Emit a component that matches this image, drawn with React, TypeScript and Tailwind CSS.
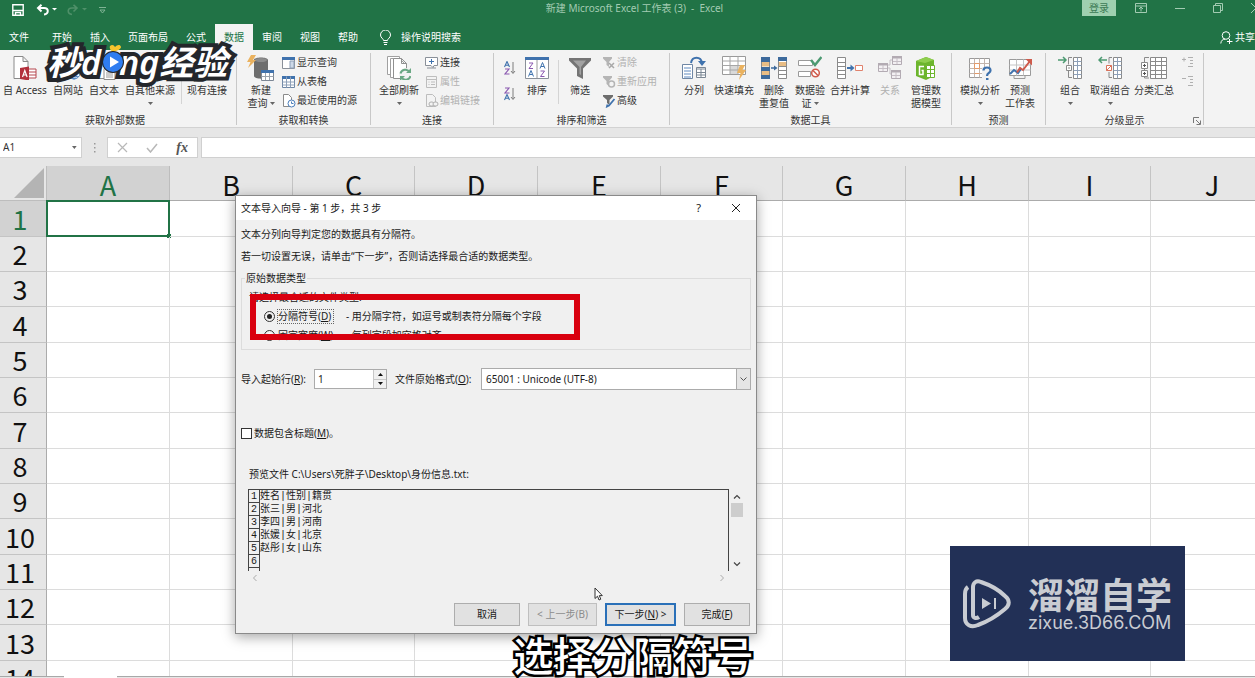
import type { ReactNode } from "react";

const columns = ["A", "B", "C", "D", "E", "F", "G", "H", "I", "J"];
const rows = Array.from({ length: 14 }, (_, i) => i + 1);

const previewLines = ["姓名|性别|籍贯", "张三|男|河北", "李四|男|河南", "张媛|女|北京", "赵彤|女|山东", ""];

function Icon({ children, size = 24, className = "" }: { children: ReactNode; size?: number; className?: string }) {
  return (
    <svg width={size} height={size} viewBox={`0 0 ${size} ${size}`} fill="none" className={`shrink-0 ${className}`} aria-hidden="true">
      {children}
    </svg>
  );
}

/* ---------- big ribbon icons, 24x24 ---------- */

const page = <path d="M4 1.5h9l5 5v16H4z M13 1.5v5h5" fill="#fff" stroke="#8a8a8a" />;

const AccessIcon = () => (
  <Icon>
    <path d="M1 .5h9l5 5v17H1z M10 .5v5h5" fill="#fff" stroke="#8a8a8a" />
    <path d="M15 13h8v9h-8M15 16h8M15 19h8" fill="#fff" stroke="#b5474f" />
    <path d="M7 12l9-1.500v14l-9-1.500z" fill="#b3303c" />
    <path d="M9.500 21l2.300-6.500 2.300 6.500M10.300 19h3" stroke="#fff" strokeWidth="1.200" />
  </Icon>
);

const WebIcon = () => (
  <Icon>
    {page}
    <circle cx="18" cy="17" r="6" fill="#fff" stroke="#4a7ebb" />
    <path d="M12 17h12M18 11v12M13.500 13.500h9M13.500 20.500h9" stroke="#4a7ebb" strokeWidth=".8" />
    <ellipse cx="18" cy="17" rx="3" ry="6" stroke="#4a7ebb" strokeWidth=".8" />
  </Icon>
);

const TextFileIcon = () => (
  <Icon>
    {page}
    <path d="M12 12.500h8l3 3v8H12z" fill="#fff" stroke="#8a8a8a" />
    <path d="M14 17h7M14 19h7M14 21h7" stroke="#9a9a9a" />
  </Icon>
);

const OtherIcon = () => (
  <Icon>
    {page}
    <path d="M12 14l4 4-4 4M21 12l-4 9" stroke="#4a62a8" strokeWidth="1.500" />
  </Icon>
);

const ConnectionsIcon = () => (
  <Icon>
    {page}
    <path d="M11 14c0-3 11-3 11 0v7c0 3-11 3-11 0z" fill="#e9b766" />
    <ellipse cx="16.500" cy="14" rx="5.500" ry="2" fill="#f5d59a" />
  </Icon>
);

const NewQueryIcon = () => (
  <svg width="28" height="26" viewBox="0 0 28 26" fill="none" className="-my-px shrink-0" aria-hidden="true">
    <path d="M7 5c0-3.500 14-3.500 14 0v16c0 3.500-14 3.500-14 0z" fill="#6d6d6d" />
    <ellipse cx="14" cy="5" rx="6" ry="2" fill="#8c8c8c" />
    <path d="M4 0h5L6 5h3L1 13l2.500-6H0z" fill="#eab25f" />
    <path d="M14.500 15.500h12v10h-12z" fill="#fff" stroke="#7c8795" />
    <path d="M14 15h13v3H14z" fill="#3f72ad" />
    <path d="M14.500 21.500h12M18.500 18v7M22.500 18v7" stroke="#9aa3ad" />
  </svg>
);

const RefreshIcon = () => (
  <Icon>
    <path d="M.5.5h12v18H.5z" fill="#fff" stroke="#a0a0a0" />
    <path d="M3.500 2.500h9l5 5v14h-14z" fill="#fff" stroke="#a0a0a0" />
    <path d="M6.500 2.500h8l5 5v15h-13z M14.500 2.500v5h5" fill="#fff" stroke="#909090" />
    <circle cx="18.500" cy="18.500" r="6.500" fill="#f3f3f3" />
    <path d="M13.500 17.500a5 5 0 0 1 9-1.500M23.500 20a5 5 0 0 1-9 1.500" stroke="#6aa884" strokeWidth="2" />
    <path d="M24 12v5h-5zM13 25v-5h5z" fill="#6aa884" />
  </Icon>
);

const SortIcon = () => (
  <Icon>
    <path d="M.5 2.500h23v20H.5z" fill="#fff" stroke="#8a9099" />
    <path d="M0 1h24v3H0z" fill="#3f72ad" />
    <path d="M12 4v18" stroke="#9a9a9a" />
    <path d="M4 7h4l-4 5.500h4M15.500 15h4l-4 5.500h4" stroke="#8a58b0" />
    <path d="M3.500 20.500l2.500-6 2.500 6M4.500 18.500h3M15 12.500l2.500-6 2.500 6M16 10.500h3" stroke="#3f72ad" />
  </Icon>
);

const FunnelIcon = () => (
  <Icon>
    <path d="M1 2h22v2.500l-8 8V23l-6-3v-7.500l-8-8z" fill="#747474" />
    <path d="M5 4.500h13l-5 6.500v8l-1.500-1v-7z" fill="#a2a2a2" />
  </Icon>
);

const SplitIcon = () => (
  <Icon>
    <path d="M.5 8.500h10v14H.5z" fill="#fff" stroke="#6f87a5" />
    <path d="M2 12h7M2 15h7M2 18h7M2 21h7" stroke="#5f8ac0" />
    <path d="M14.500 11.500h9v10h-9z" fill="#fff" stroke="#7b8794" />
    <path d="M14.500 13h9M14.500 16.500h9M14.500 19h9M19 13v9" stroke="#7b8794" />
    <path d="M9 7c1-7 10-7 11 0" stroke="#3f72ad" strokeWidth="2" />
    <path d="M16 5h8l-4 5z" fill="#3f72ad" />
  </Icon>
);

const FlashFillIcon = () => (
  <Icon>
    <path d="M.5.5h23v18H.5z" fill="#fff" stroke="#9a9a9a" />
    <path d="M8 9h8v9H8z" fill="#d9d9d9" />
    <path d="M.5 5h23M.5 9.500h23M.5 14h23M8 .5v18M16 .5v18" stroke="#a6a6a6" />
    <path d="M18 9h5l-2.500 5H24l-7 10 1.500-7H15z" fill="#eab25f" />
  </Icon>
);

const DedupeIcon = () => (
  <svg width="26" height="24" viewBox="0 0 26 24" fill="none" aria-hidden="true">
    <path d="M.5 2.500h8v20h-8zM17.500 2.500h8v20h-8z" fill="#fff" stroke="#8a8a8a" />
    <path d="M0 1h9v5H0zM0 11h9v4H0zM0 19h9v4H0zM17 1h9v4h-9z" fill="#3d6a9c" />
    <path d="M1 6h7v4.500H1zM1 15h7v4H1zM18 6h7v4h-7z" fill="#e8bd85" />
    <path d="M17.500 10.500h8M17.500 14.500h8M17.500 18.500h8" stroke="#8a8a8a" />
    <path d="M10 12h4" stroke="#3d6a9c" strokeWidth="1.500" />
    <path d="M13 9.500l3.500 2.500-3.500 2.500z" fill="#3d6a9c" />
  </svg>
);

const ValidationIcon = () => (
  <Icon>
    <path d="M.5 4.500h14v5H.5zM.5 15.500h12v5H.5z" fill="#fff" stroke="#9a9a9a" />
    <path d="M13 4l4 5 6.500-8" stroke="#4d9a72" strokeWidth="2.500" />
    <circle cx="17.500" cy="17" r="3.800" fill="#fff" stroke="#cf5b4c" strokeWidth="1.500" />
    <path d="M15 14.500l5 5" stroke="#cf5b4c" strokeWidth="1.500" />
  </Icon>
);

const ConsolidateIcon = () => (
  <svg width="26" height="24" viewBox="0 0 26 24" fill="none" aria-hidden="true">
    <path d="M.5 1.500h8v21h-8z" fill="#fff" stroke="#8a8a8a" />
    <path d="M.5 6.500h8M.5 10.500h8M.5 14.500h8M.5 18.500h8" stroke="#8a8a8a" />
    <path d="M10 12h5" stroke="#3f72ad" strokeWidth="2" />
    <path d="M13.500 8.500l4 3.500-4 3.500z" fill="#3f72ad" />
    <path d="M18.500 9.500h7v5h-7z" fill="#fff" stroke="#e0826d" />
  </svg>
);

const RelationsIcon = () => (
  <Icon>
    <path d="M.5 7.500h9v8h-9zM14.500.5h9v8h-9zM13.500 14.500h9v8h-9z" fill="#f3f0f3" stroke="#b3abb3" />
    <path d="M0 7h10v2.500H0zM14 0h10v2.500H14zM13 14h10v2.500H13z" fill="#b3abb3" />
    <path d="M1 12.500h8M15 5.500h8M14 19.500h8M5 9v6M19 2v6M18 16v6M10 9h2V4h2M10 12h2v6h1" stroke="#c6bfc6" />
  </Icon>
);

const DataModelIcon = () => (
  <Icon>
    <path d="M2 5l10-4 8 3v16l-8 4-10-4z" fill="#6cb52d" />
    <path d="M2 5l10-4 8 3-9 3z" fill="#8fce4e" />
    <path d="M10 10.500H5.500v8H9v-4H7.500" stroke="#fff" strokeWidth="1.500" />
    <path d="M12.500 9.500h8v12h-8z" fill="#fff" stroke="#6cb52d" />
    <path d="M12.500 13.500h8M12.500 17.500h8M16.500 9.500v12" stroke="#6cb52d" />
  </Icon>
);

const WhatIfIcon = () => (
  <Icon>
    <path d="M1.500 2.500h20v19h-20z" fill="#fff" stroke="#9a9a9a" />
    <path d="M1.500 7.500h20M1.500 12.500h20M1.500 17.500h20M6.500 2.500v19M11.500 2.500v19M16.500 2.500v19" stroke="#c2b5ad" />
    <path d="M6.500 7.500h5v5h-5zM6.500 17.500h5" stroke="#e49a68" />
    <path d="M14 11h10v13H14z" fill="#f3f3f3" />
    <path d="M15.500 14.500c0-4 7-4 7 0 0 2.500-3.500 2.500-3.500 5.500" stroke="#3f72ad" strokeWidth="2.200" />
    <path d="M18 22h2.500v2H18z" fill="#3f72ad" />
  </Icon>
);

const ForecastIcon = () => (
  <Icon>
    <path d="M1.500 3.500h21v16h-21z" fill="#fff" stroke="#9a9a9a" />
    <path d="M1.500 9h21M1.500 14h21M8.500 3.500v16M15.500 3.500v16" stroke="#c4c4c4" />
    <path d="M6 19.500v3h11v-3" stroke="#9a9a9a" />
    <path d="M2 18l4-4 4 3 3-4" stroke="#3f72ad" strokeWidth="2" />
    <path d="M9 16.500l3-4.500 3 2 7-9" stroke="#cf5b4c" strokeWidth="2" />
    <path d="M17.500 3H24v6.500z" fill="#cf5b4c" />
  </Icon>
);

const GroupIcon = () => (
  <Icon>
    <path d="M0 4h7M5 1l3 3-3 3" stroke="#4d9a72" strokeWidth="1.500" />
    <path d="M15.500 1.500h8v21h-8z" fill="#fff" stroke="#8a8a8a" />
    <path d="M19.500 1.500v21M15.500 5.500h8M15.500 9.500h8M15.500 14.500h8M15.500 18.500h8" stroke="#8ea0b8" />
    <path d="M14 1.500h-3.500v7M10.500 15v6.500H14" stroke="#8a8a8a" />
    <path d="M8.500 9.500h5v5h-5z M10 12h2" fill="#fff" stroke="#8a8a8a" />
  </Icon>
);

const UngroupIcon = () => (
  <Icon>
    <path d="M1 4h8M4 1L1 4l3 3" stroke="#4d9a72" strokeWidth="1.500" />
    <path d="M15.500 1.500h8v21h-8z" fill="#fff" stroke="#8a8a8a" />
    <path d="M19.500 1.500v21M15.500 5.500h8M15.500 9.500h8M15.500 14.500h8M15.500 18.500h8" stroke="#8ea0b8" />
    <path d="M14 1.500h-3v6M11 16v5.500h3" stroke="#8a8a8a" />
    <path d="M8.500 9.500h5v5h-5z M8.500 14.500l5-5" fill="#fff" stroke="#d9715a" />
  </Icon>
);

const SubtotalIcon = () => (
  <svg width="26" height="24" viewBox="0 0 26 24" fill="none" aria-hidden="true">
    <path d="M9.500 1.500h16v21h-16z" fill="#fff" stroke="#8a8a8a" />
    <path d="M9.500 5.500h16M9.500 9.500h16M9.500 14.500h16M9.500 18.500h16M14.500 1.500v21M20.500 1.500v21" stroke="#8a8a8a" />
    <path d="M8 1.500H3.500V22H8" stroke="#8a8a8a" />
    <path d="M.5 6.500h6v6h-6zM.5 14.500h6v6h-6z" fill="#fff" stroke="#8a8a8a" />
    <path d="M2 9.500h3M3.500 8v3M2 17.500h3M3.500 16v3" stroke="#555" />
  </svg>
);

/* ---------- small ribbon icons, 14x14 ---------- */

const ShowQueriesIcon = () => (
  <Icon size={14}>
    <path d="M.5 1.500h12v11H.5z" fill="#fff" stroke="#8a9099" />
    <path d="M0 1h13v3H0z" fill="#3f72ad" />
    <path d="M8 5h4v7H8z" fill="#cdd9e8" stroke="#8ea0b8" />
  </Icon>
);

const FromTableIcon = () => (
  <Icon size={14}>
    <path d="M.5 1.500h12v11H.5z" fill="#fff" stroke="#6f87a5" />
    <path d="M0 1h13v3H0z" fill="#3f72ad" />
    <path d="M.5 7h12M.5 10h12M4.500 1.500v11M8.500 1.500v11" stroke="#8ea0b8" />
  </Icon>
);

const RecentIcon = () => (
  <Icon size={14}>
    <path d="M1.500.5h5l3 3v9h-8z" fill="#fff" stroke="#8a8a8a" />
    <circle cx="9.500" cy="9.500" r="3.500" fill="#fff" stroke="#4a7ebb" />
    <path d="M9.500 7.500v2h2" stroke="#4a7ebb" />
  </Icon>
);

const LinkIcon = () => (
  <Icon size={14}>
    <path d="M.5 1.500h12v8H9l-1 2-2-2H.5z" fill="#fff" stroke="#8a9099" />
    <path d="M6.500 3v5M4 5.500h5" stroke="#3f72ad" />
    <path d="M2 12h9" stroke="#8a9099" />
  </Icon>
);

const PropertiesIcon = () => (
  <Icon size={14}>
    <path d="M1.500 1.500h10v11h-10zM1.500 4.500h10M3.500 7h1M6 7h4M3.500 9.500h1M6 9.500h4" stroke="#bdbdbd" />
  </Icon>
);

const EditLinksIcon = () => (
  <Icon size={14}>
    <path d="M1.500.5h6l3 3v9h-9z" stroke="#bdbdbd" />
    <rect x="4" y="8" width="5" height="4" rx="2" fill="#f3f3f3" stroke="#b0b0b0" />
    <rect x="8" y="8" width="5" height="4" rx="2" fill="#f3f3f3" stroke="#b0b0b0" />
  </Icon>
);

const ClearIcon = () => (
  <Icon size={14}>
    <path d="M1 1h9v1.500L7 6v5L4.500 9V6L1 2.500z" fill="#b5b5b5" />
    <path d="M7 7l5 5M12 7l-5 5" stroke="#a8a8a8" strokeWidth="1.500" />
  </Icon>
);

const ReapplyIcon = () => (
  <Icon size={14}>
    <path d="M1 1h9v1.500L7 6v5L4.500 9V6L1 2.500z" fill="#b5b5b5" />
    <circle cx="9.500" cy="9" r="3" fill="#f3f3f3" stroke="#b5b5b5" strokeWidth="1.500" />
  </Icon>
);

const AdvancedIcon = () => (
  <Icon size={14}>
    <path d="M1 1h10v1.500L7.500 6v5L5 9V6L1 2.500z" fill="#6d6d6d" />
    <path d="M12.500 5L7 11.500l-2 1 .5-2" stroke="#3f72ad" strokeWidth="1.800" />
  </Icon>
);

const SortAz = ({ flip = false }: { flip?: boolean }) => (
  <svg width="12" height="14" viewBox="0 0 12 14" fill="none" aria-hidden="true">
    <g transform={flip ? "translate(0 7)" : undefined}>
      <path d="M.5 6L3 .5 5.500 6M1.500 4.200h3" stroke="#3f72ad" strokeWidth="1.100" />
    </g>
    <g transform={flip ? "translate(0 -7)" : undefined}>
      <path d="M1 8h4l-4 5h4.500" stroke="#8a58b0" strokeWidth="1.100" />
    </g>
    <path d="M9 1v11M7 10l2 2.500 2-2.500" stroke="#7d7d7d" />
  </svg>
);

const DetailIcon = ({ plus = false }: { plus?: boolean }) => (
  <Icon size={14}>
    <path d="M6 1.500h5M8 4.500h3M8 7.500h3M6 10.500h5" stroke="#b0b0b0" />
    <path d="M0 3.500h4" stroke="#b0b0b0" />
    {plus && <path d="M2 1.500v4" stroke="#b0b0b0" />}
  </Icon>
);

/* ---------- ribbon parts ---------- */

const Caret = ({ className = "" }: { className?: string }) => (
  <svg width="5" height="3" viewBox="0 0 5 3" className={className} aria-hidden="true">
    <path d="M0 0h5L2.500 3z" fill="#666" />
  </svg>
);

type BigProps = { icon: ReactNode; lines: string[]; width?: string; caret?: "below" | "inline"; disabled?: boolean };

function BigButton({ icon, lines, width = "w-9", caret, disabled }: BigProps) {
  return (
    <button type="button" disabled={disabled} className={`flex flex-col items-center pt-[3px] ${width} ${disabled ? "text-[#b1b1b1]" : ""}`}>
      <span className="flex h-6 items-center">{icon}</span>
      <span className="mt-1 flex flex-col items-center whitespace-nowrap">
        {lines.map((line, i) => (
          <span key={line} className="flex items-center gap-0.5">
            {line}
            {caret === "inline" && i === lines.length - 1 && <Caret />}
          </span>
        ))}
        {caret === "below" && <Caret className="mt-[5px]" />}
      </span>
    </button>
  );
}

function SmallButton({ icon, label, disabled }: { icon: ReactNode; label: string; disabled?: boolean }) {
  return (
    <button type="button" disabled={disabled} className={`flex h-[19px] items-center gap-px whitespace-nowrap ${disabled ? "text-[#b1b1b1]" : ""}`}>
      {icon}
      {label}
    </button>
  );
}

function Group({ title, children, width, launcher }: { title: string; children: ReactNode; width: string; launcher?: boolean }) {
  return (
    <section className={`relative flex shrink-0 flex-col border-r border-[#c8c8c8] px-1.5 first:pl-0 ${width}`}>
      <div className="flex h-[57px]">{children}</div>
      <h2 className="mt-[5px] text-center leading-[10px]">{title}</h2>
      {launcher && (
        <svg width="8" height="8" viewBox="0 0 8 8" fill="none" className="absolute right-0.5 bottom-0" aria-hidden="true">
          <path d="M.5 6V.5H6M3 3l4 4M7.500 3.500v4h-4" stroke="#777" />
        </svg>
      )}
    </section>
  );
}

const Divider = () => <span className="mx-[3px] mt-[7px] h-11 w-px bg-[#d4d4d4]" />;

function Ribbon() {
  return (
    <div className="flex overflow-hidden border-b border-[#d2d2d2] bg-[#f3f3f3] pt-[3px] pb-0.5 text-[10px] leading-[13px] text-[#333]">
      <Group title="获取外部数据" width="w-[237px]">
        <BigButton icon={<AccessIcon />} lines={["自 Access"]} width="w-[50px]" />
        <BigButton icon={<WebIcon />} lines={["自网站"]} />
        <BigButton icon={<TextFileIcon />} lines={["自文本"]} />
        <BigButton icon={<OtherIcon />} lines={["自其他来源"]} width="w-14" caret="below" />
        <Divider />
        <BigButton icon={<ConnectionsIcon />} lines={["现有连接"]} width="w-11" />
      </Group>
      <Group title="获取和转换" width="w-[134px]">
        <BigButton icon={<NewQueryIcon />} lines={["新建", "查询"]} caret="inline" />
        <div className="ml-[3px]">
          <SmallButton icon={<ShowQueriesIcon />} label="显示查询" />
          <SmallButton icon={<FromTableIcon />} label="从表格" />
          <SmallButton icon={<RecentIcon />} label="最近使用的源" />
        </div>
      </Group>
      <Group title="连接" width="w-[123px]">
        <BigButton icon={<RefreshIcon />} lines={["全部刷新"]} width="w-11" caret="below" />
        <div className="ml-1">
          <SmallButton icon={<LinkIcon />} label="连接" />
          <SmallButton icon={<PropertiesIcon />} label="属性" disabled />
          <SmallButton icon={<EditLinksIcon />} label="编辑链接" disabled />
        </div>
      </Group>
      <Group title="排序和筛选" width="w-[176px]">
        <div className="mr-[3px] ml-1 flex flex-col gap-3 pt-2">
          <button type="button" aria-label="升序">
            <SortAz />
          </button>
          <button type="button" aria-label="降序">
            <SortAz flip />
          </button>
        </div>
        <BigButton icon={<SortIcon />} lines={["排序"]} />
        <Divider />
        <BigButton icon={<FunnelIcon />} lines={["筛选"]} />
        <div className="ml-1">
          <SmallButton icon={<ClearIcon />} label="清除" disabled />
          <SmallButton icon={<ReapplyIcon />} label="重新应用" disabled />
          <SmallButton icon={<AdvancedIcon />} label="高级" />
        </div>
      </Group>
      <Group title="数据工具" width="w-[282px]">
        <BigButton icon={<SplitIcon />} lines={["分列"]} />
        <BigButton icon={<FlashFillIcon />} lines={["快速填充"]} width="w-11" />
        <BigButton icon={<DedupeIcon />} lines={["删除", "重复值"]} />
        <BigButton icon={<ValidationIcon />} lines={["数据验", "证"]} caret="inline" />
        <BigButton icon={<ConsolidateIcon />} lines={["合并计算"]} width="w-11" />
        <BigButton icon={<RelationsIcon />} lines={["关系"]} disabled />
        <BigButton icon={<DataModelIcon />} lines={["管理数", "据模型"]} />
      </Group>
      <Group title="预测" width="w-[94px]">
        <BigButton icon={<WhatIfIcon />} lines={["模拟分析"]} width="w-11" caret="below" />
        <BigButton icon={<ForecastIcon />} lines={["预测", "工作表"]} />
      </Group>
      <Group title="分级显示" width="w-[158px]" launcher>
        <BigButton icon={<GroupIcon />} lines={["组合"]} caret="below" />
        <BigButton icon={<UngroupIcon />} lines={["取消组合"]} width="w-11" caret="below" />
        <BigButton icon={<SubtotalIcon />} lines={["分类汇总"]} width="w-11" />
        <div className="ml-1.5">
          <SmallButton icon={<DetailIcon plus />} label="" disabled />
          <SmallButton icon={<DetailIcon />} label="" disabled />
        </div>
      </Group>
    </div>
  );
}

function TitleBar() {
  return (
    <div className="flex h-4 overflow-hidden text-[10px] leading-4 text-[#a3cbb2]">
      <div className="flex flex-1 items-center pt-1 pl-3">
        <svg width="12" height="12" viewBox="0 0 12 12" fill="none" aria-hidden="true">
          <path d="M.8.8h10.400v10.400H.8z M.8 6.500h10.400" stroke="#fff" strokeWidth="1.400" />
          <path d="M3.500 11V8.500h5V11" stroke="#fff" strokeWidth="1.400" />
        </svg>
        <svg width="21" height="12" viewBox="0 0 21 12" fill="none" className="ml-3" aria-hidden="true">
          <path d="M2 4h6c5 0 5 6 0 6.500M5.500.8L2 4l3.500 3.500" stroke="#fff" strokeWidth="2" />
          <path d="M16 4h5l-2.500 2.500z" fill="#fff" />
        </svg>
        <svg width="21" height="12" viewBox="0 0 21 12" fill="none" className="ml-[9px]" aria-hidden="true">
          <path d="M11 4H6C1 4 1 10 6 10.500M7.500.8L11 4 7.500 7.500" stroke="#4f9069" strokeWidth="1.600" />
          <path d="M16 4h5l-2.500 2.500z" fill="#4f9069" />
        </svg>
        <svg width="7" height="7" viewBox="0 0 7 7" fill="none" className="ml-3" aria-hidden="true">
          <path d="M0 .5h7M1 3h5L3.500 6z" stroke="#7fb394" />
        </svg>
      </div>
      <h1 className="pr-1 whitespace-pre">新建 Microsoft Excel 工作表 (3)  -  Excel</h1>
      <div className="-mr-1.5 flex flex-1 items-center justify-end">
        <button type="button" className="mr-[19px] h-4 w-[34px] bg-[#9fd0b0] leading-[15px] text-[#3c7a55]">登录</button>
        <svg width="12" height="10" viewBox="0 0 12 10" fill="none" aria-hidden="true">
          <path d="M.5.5h11v9H.5zM.5 3h11M6 8.500V4.500M4 6l2-2 2 2" stroke="#a3cbb2" />
        </svg>
        <svg width="10" height="10" viewBox="0 0 10 10" className="ml-7" aria-hidden="true">
          <path d="M0 5.500h10" stroke="#a3cbb2" />
        </svg>
        <svg width="10" height="10" viewBox="0 0 10 10" fill="none" className="ml-7" aria-hidden="true">
          <path d="M.5 2.500h7v7h-7zM2.500 2V.5h7v7H8" stroke="#a3cbb2" />
        </svg>
        <svg width="10" height="10" viewBox="0 0 10 10" className="ml-7" aria-hidden="true">
          <path d="M0 0l10 10M10 0L0 10" stroke="#a3cbb2" />
        </svg>
      </div>
    </div>
  );
}

function Tabs() {
  const tabs = ["开始", "插入", "页面布局", "公式", "数据", "审阅", "视图", "帮助"];
  return (
    <nav className="mt-2 flex h-[26px] items-stretch overflow-hidden text-[10px] leading-[26px] whitespace-nowrap text-white">
      <a href="#file" className="mr-[5px] px-[9px]">文件</a>
      {tabs.map((tab) => (
        <a key={tab} href="#tab" className={`px-[9px] ${tab === "数据" ? "bg-[#f3f3f3] text-[#217346]" : ""}`}>
          {tab}
        </a>
      ))}
      <button type="button" className="ml-[13px] flex items-center gap-[10px]">
        <svg width="11" height="15" viewBox="0 0 11 15" fill="none" aria-hidden="true">
          <path d="M3.500 10.500c0-2-3-2.500-3-5.500a5 5 0 0 1 10 0c0 3-3 3.500-3 5.500zM3.500 12.500h4M4 14.500h3" stroke="#fff" />
        </svg>
        操作说明搜索
      </button>
      <button type="button" className="ml-auto flex items-center gap-0.5">
        <svg width="13" height="13" viewBox="0 0 13 13" fill="none" aria-hidden="true">
          <circle cx="6" cy="4.500" r="3.800" stroke="#fff" />
          <path d="M.8 12.500C1 9.500 3 8 5 8.200M9.500 8v5M7 10.500h5.500" stroke="#fff" />
        </svg>
        共享
      </button>
    </nav>
  );
}

function FormulaBar() {
  return (
    <div className="flex bg-[#e6e6e6] pt-[9px] pb-2 text-[10px]">
      <div className="flex h-[21px] w-[82px] items-center border border-l-0 border-[#d0d0d0] bg-white pr-1 pl-[3px]">
        <input aria-label="名称框" defaultValue="A1" className="w-full min-w-0 text-[#333] outline-none" />
        <Caret />
      </div>
      <svg width="3" height="21" viewBox="0 0 3 21" className="mx-[11px]" aria-hidden="true">
        <path d="M1 6h1.500v1.500H1zM1 10h1.500v1.500H1zM1 14h1.500v1.500H1z" fill="#999" />
      </svg>
      <div className="flex h-[21px] w-[91px] items-center justify-between border border-[#d0d0d0] bg-white px-[9px]">
        <svg width="11" height="11" viewBox="0 0 11 11" aria-hidden="true">
          <path d="M1 1l9 9M10 1l-9 9" stroke="#b8b8b8" strokeWidth="1.200" />
        </svg>
        <svg width="12" height="10" viewBox="0 0 12 10" fill="none" aria-hidden="true">
          <path d="M1 5l3.500 4L11 1" stroke="#b8b8b8" strokeWidth="1.500" />
        </svg>
        <span className="font-['Liberation_Serif',serif] text-[14px] leading-5 font-bold text-[#555] italic">fx</span>
      </div>
      <input aria-label="编辑栏" className="ml-[3px] h-[21px] min-w-0 flex-1 border border-r-0 border-[#d0d0d0] bg-white px-1 outline-none" />
    </div>
  );
}

function Sheet() {
  return (
    <div className="min-h-0 flex-1 overflow-hidden bg-white">
      <table className="w-px table-fixed border-separate border-spacing-0 font-['Noto_Sans_CJK_SC',sans-serif] text-[27px] leading-8 text-[#111]">
        <colgroup>
          <col className="w-[47px]" />
          {columns.map((c, i) => (
            <col key={c} className={i % 3 === 2 ? "w-[122px]" : "w-[123px]"} />
          ))}
        </colgroup>
        <thead>
          <tr className="h-[35px] bg-[#e6e6e6]">
            <th className="border-r border-b border-[#bdbdbd] p-0">
              <svg width="30" height="30" viewBox="0 0 30 30" className="mr-0.5 ml-auto" aria-hidden="true">
                <path d="M30 0v30H0z" fill="#b4b4b4" />
              </svg>
            </th>
            {columns.map((c) => (
              <th
                key={c}
                scope="col"
                className={`border-r border-b p-0 pt-1 leading-[30px] font-normal ${
                  c === "A" ? "border-r-[#bdbdbd] border-b-[#217346] bg-[#d2d2d2] text-[#217346]" : "border-[#c4c4c4] border-b-[#ababab]"
                }`}
              >
                {c}
              </th>
            ))}
          </tr>
        </thead>
        <tbody>
          {rows.map((r) => (
            <tr key={r} className={r % 3 === 1 ? "h-9" : "h-[35px]"}>
              <th
                scope="row"
                className={`border-r border-b border-[#c4c4c4] border-r-[#ababab] p-0 pr-1.5 text-center font-normal ${
                  r === 1 ? "bg-[#d2d2d2] text-[#217346]" : "bg-[#e6e6e6]"
                }`}
              >
                {r}
              </th>
              {columns.map((c) => (
                <td key={c} className="relative border-r border-b border-[#dcdcdc] p-0">
                  {r === 1 && c === "A" && (
                    <span className="absolute -inset-x-px -inset-y-px border-2 border-[#217346]">
                      <span className="absolute -right-[3px] -bottom-[3px] size-1 bg-[#217346]" />
                    </span>
                  )}
                </td>
              ))}
            </tr>
          ))}
        </tbody>
      </table>
    </div>
  );
}

const Key = ({ children }: { children: string }) => (
  <>
    (<span className="underline underline-offset-1">{children}</span>)
  </>
);

function TypeRadio({ label, letter, note, checked }: { label: string; letter: string; note: string; checked?: boolean }) {
  return (
    <label className="flex h-[19px] items-center whitespace-nowrap">
      <input
        type="radio"
        name="type"
        defaultChecked={checked}
        className="mr-0.5 ml-[15px] size-[11px] appearance-none rounded-full border border-[#333] bg-white bg-clip-content p-0.5 checked:bg-[#222]"
      />
      <span className={`w-[57px] border leading-[13px] ${checked ? "border-dotted border-[#666]" : "border-transparent"}`}>
        {label}
        <Key>{letter}</Key>
      </span>
      <span className="ml-3">- {note}</span>
    </label>
  );
}

function ImportDialog() {
  const button = "h-[23px] border bg-[#e1e1e1] text-center";
  return (
    <div
      role="dialog"
      aria-label="文本导入向导"
      className="absolute top-[195px] left-[235px] w-[522px] border border-[#8a8a8a] bg-[#f0f0f0] text-[10px] text-[#1a1a1a] shadow-[0_3px_12px_rgba(0,0,0,0.35)]"
    >
      <div className="flex h-6 items-center bg-white pr-[15px] pl-[5px]">
        <span className="flex-1">文本导入向导 - 第 1 步，共 3 步</span>
        <button type="button" className="mr-[30px] text-[11px]">?</button>
        <button type="button" aria-label="关闭">
          <svg width="10" height="10" viewBox="0 0 10 10" className="block" aria-hidden="true">
            <path d="M1 1l8 8M9 1L1 9" stroke="#222" />
          </svg>
        </button>
      </div>

      <div className="px-[5px] pt-[3px] pb-[7px]">
        <p className="leading-[22px]">文本分列向导判定您的数据具有分隔符。</p>
        <p className="leading-[22px]">若一切设置无误，请单击“下一步”，否则请选择最合适的数据类型。</p>

        <fieldset className="relative mt-1 border border-[#dcdcdc] px-[7px] pb-1">
          <legend className="-ml-1 px-px leading-[14px]">原始数据类型</legend>
          <p className="mt-[3px] leading-[19px]">请选择最合适的文件类型:</p>
          <TypeRadio label="分隔符号" letter="D" note="用分隔字符，如逗号或制表符分隔每个字段" checked />
          <TypeRadio label="固定宽度" letter="W" note="每列字段加空格对齐" />
          {/* highlight frame */}
          <span className="pointer-events-none absolute top-[9px] left-2 h-[46px] w-[330px] border-6 border-[#d9000f]" />
        </fieldset>

        <div className="mt-[18px] flex h-[22px] items-center">
          <label htmlFor="start-row" className="w-[73px]">
            导入起始行<Key>R</Key>:
          </label>
          <div className="flex h-5 w-[73px] border border-[#ababab] bg-white">
            <input id="start-row" defaultValue="1" className="min-w-0 flex-1 pl-[3px] outline-none" />
            <div className="flex w-[13px] flex-col">
              <button type="button" aria-label="增加" className="flex flex-1 items-center justify-center border-b border-l border-[#c8c8c8] bg-[#f0f0f0]">
                <svg width="5" height="3" viewBox="0 0 5 3" aria-hidden="true">
                  <path d="M0 3h5L2.500 0z" fill="#111" />
                </svg>
              </button>
              <button type="button" aria-label="减少" className="flex flex-1 items-center justify-center border-l border-[#c8c8c8] bg-[#f0f0f0]">
                <svg width="5" height="3" viewBox="0 0 5 3" aria-hidden="true">
                  <path d="M0 0h5L2.500 3z" fill="#111" />
                </svg>
              </button>
            </div>
          </div>
          <label htmlFor="origin" className="ml-2 w-[86px]">
            文件原始格式<Key>O</Key>:
          </label>
          <div className="relative flex h-[22px] flex-1">
            <select id="origin" className="w-full appearance-none border border-[#ababab] bg-white pl-1 outline-none">
              <option>65001 : Unicode (UTF-8)</option>
            </select>
            <span className="pointer-events-none absolute inset-y-0 right-0 flex w-[15px] items-center justify-center border border-[#ababab] bg-[#e5e5e5]">
              <svg width="7" height="5" viewBox="0 0 7 5" fill="none" aria-hidden="true">
                <path d="M.5.5l3 3 3-3" stroke="#555" />
              </svg>
            </span>
          </div>
        </div>

        <label className="mt-9 flex h-[14px] items-center gap-0.5">
          <input type="checkbox" className="size-[11px] appearance-none border border-[#333] bg-white" />
          <span>
            数据包含标题<Key>M</Key>。
          </span>
        </label>

        <p className="mt-[27px] ml-2 leading-[14px]">预览文件 C:\Users\死胖子\Desktop\身份信息.txt:</p>

        <div className="mt-2 ml-[7px] flex">
          <div className="h-[82px] w-[481px] overflow-hidden border border-b-0 border-[#444]">
            <table className="border-separate border-spacing-0 font-['Liberation_Mono','Noto_Sans_CJK_SC',monospace] leading-3">
              <tbody>
                {previewLines.map((line, i) => (
                  <tr key={i} className="h-[13px]">
                    <th scope="row" className="w-[11px] border-r border-b border-[#444] p-0 pt-px text-center leading-[11px] font-normal">{i + 1}</th>
                    <td className="p-0 pt-px">{line}</td>
                  </tr>
                ))}
                <tr className="h-[13px]">
                  <th className="border-r border-[#444] p-0" />
                  <td className="p-0" />
                </tr>
              </tbody>
            </table>
          </div>
          <div className="flex w-4 flex-col items-center pt-[5px] pb-1">
            <svg width="8" height="5" viewBox="0 0 8 5" fill="none" aria-hidden="true">
              <path d="M1 4.500l3-3 3 3" stroke="#444" strokeWidth="1.200" />
            </svg>
            <span className="mt-1 h-[14px] w-3 bg-[#cdcdcd]" />
            <svg width="8" height="5" viewBox="0 0 8 5" fill="none" className="mt-auto" aria-hidden="true">
              <path d="M1 .5l3 3 3-3" stroke="#444" strokeWidth="1.200" />
            </svg>
          </div>
        </div>
        <div className="mt-[3px] ml-[11px] flex h-2 w-[473px] justify-between">
          <svg width="5" height="8" viewBox="0 0 5 8" fill="none" aria-hidden="true">
            <path d="M4.500 1l-3 3 3 3" stroke="#aaa" />
          </svg>
          <svg width="5" height="8" viewBox="0 0 5 8" fill="none" aria-hidden="true">
            <path d="M.5 1l3 3-3 3" stroke="#aaa" />
          </svg>
        </div>

        <div className="mt-[21px] flex justify-end gap-2 pr-px">
          <button type="button" className={`${button} w-[66px] border-[#adadad]`}>取消</button>
          <button type="button" disabled className={`${button} w-[69px] border-[#bfbfbf] text-[#8c8c8c]`}>&lt; 上一步(B)</button>
          <button type="button" className={`${button} w-[71px] border-2 border-[#2a70b8]`}>
            下一步<Key>N</Key> &gt;
          </button>
          <button type="button" className={`${button} w-[66px] border-[#adadad]`}>
            完成<Key>F</Key>
          </button>
        </div>
      </div>

      <svg width="9" height="14" viewBox="0 0 9 14" className="absolute top-[391px] left-[358px]" aria-hidden="true">
        <path d="M1 1v10.500l2.500-2.300L5 13l1.800-.8L5.300 8.600h3z" fill="#fff" stroke="#333" />
      </svg>
    </div>
  );
}

function BrandMark() {
  return (
    <div className="absolute top-[43px] left-[47px] flex h-[38px] items-center font-['Noto_Sans','Noto_Sans_CJK_SC',sans-serif] text-[34px] leading-[38px] font-semibold whitespace-nowrap text-white italic [-webkit-text-stroke:8px_#23262b] [paint-order:stroke_fill]">
      <span>秒d</span>
      <span className="ml-[18px]">ng经验</span>
      <svg width="24" height="34" viewBox="0 0 24 34" className="absolute top-0 left-[55px]" aria-hidden="true">
        <path d="M8 3c2-2 4-1 5 1 2-2 5-3 6 0 0 2-4 4-8 5-2-1-4-4-3-6z" fill="#f7c52e" />
        <circle cx="11" cy="19" r="10" fill="#2f7df0" stroke="#23262b" strokeWidth="2" />
        <path d="M8 13.500v11l9-5.500z" fill="#fff" />
      </svg>
    </div>
  );
}

function SiteBadge() {
  return (
    <div className="absolute right-[70px] bottom-[17px] flex h-[115px] w-[235px] items-center gap-[17px] bg-[#223056] pl-[13px] text-[#c9ccd2]">
      <svg width="48" height="50" viewBox="0 0 48 50" fill="none" aria-hidden="true">
        <path d="M5 8C2 10 2 12 2 15v24c0 7 6 10 13 7 11-4 20-10 27-16 5-4 5-9 0-13C35 10 27 6 18 3c-5-2-8 1-8 5v28c0 3 3 4 6 2" stroke="#c9ccd2" strokeWidth="4" />
        <path d="M19 19v11l9-5.500zM31 19h2v11h-2z" fill="#c9ccd2" />
      </svg>
      <div className="whitespace-nowrap">
        <p className="font-['Noto_Sans_CJK_SC',sans-serif] text-[36px] leading-9 font-bold">溜溜自学</p>
        <p className="mt-0.5 font-['Inter',sans-serif] text-[18px] leading-5">zixue.3D66.COM</p>
      </div>
    </div>
  );
}

export default function App() {
  return (
    <div className="relative flex h-screen flex-col overflow-hidden bg-white font-['Noto_Sans','Noto_Sans_CJK_SC',sans-serif]">
      <header className="bg-[#217346]">
        <TitleBar />
        <Tabs />
      </header>
      <Ribbon />
      <FormulaBar />
      <Sheet />
      <div className="flex h-0.5">
        <span className="w-16 border-t border-[#a8a8a8] bg-[#e6e6e6]" />
        <span className="w-[53px] bg-white" />
        <span className="flex-1 border-t border-[#a8a8a8] bg-[#e6e6e6]" />
      </div>

      <BrandMark />
      <ImportDialog />
      <SiteBadge />
      <p className="pointer-events-none absolute inset-x-0 bottom-0 pl-3 text-center text-[40px] leading-[44px] font-medium text-white [-webkit-text-stroke:5px_#000] [paint-order:stroke_fill]">
        选择分隔符号
      </p>
    </div>
  );
}
